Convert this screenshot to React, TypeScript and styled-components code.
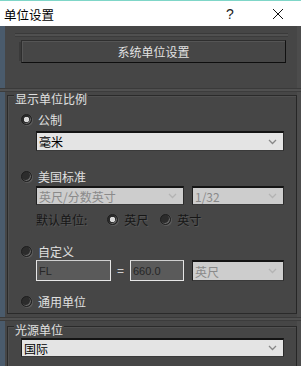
import React from 'react'
import styled, { createGlobalStyle } from 'styled-components'

const GlobalStyle = createGlobalStyle`
  html, body {
    margin: 0;
    padding: 0;
    background: #464646;
  }
  body {
    font-family: "Noto Sans CJK SC", "Liberation Sans", sans-serif;
    font-size: 12px;
  }
`

const Window = styled.div`
  width: 301px;
  height: 366px;
  display: flex;
  flex-direction: column;
  overflow: hidden;
`

const TitleBar = styled.div`
  height: 25px;
  flex: none;
  display: flex;
  align-items: center;
  background: #ffffff;
  border-top: 1px solid #7fd6c8;
  color: #000;
  font-size: 12.5px;
`

const Title = styled.div`
  flex: 1;
  padding-left: 4px;
  margin-top: 1px;
`

const Help = styled.div`
  width: 12px;
  margin-right: 33px;
  font-family: "Liberation Sans", sans-serif;
  font-size: 14px;
  color: #222;
`

const Close = styled.div`
  width: 14px;
  height: 14px;
  margin-right: 16px;
  display: flex;
  align-items: center;
  justify-content: center;
`

const Body = styled.div`
  flex: 1;
  display: flex;
  flex-direction: column;
  background: #464646;
  border-left: 5px solid #4a5b6c;
  border-right: 4px solid #4c4c4c;
  color: #dedede;
`

const RolloutBar = styled.div<{ $top: number; $left: number; $right: number }>`
  height: 2px;
  margin: ${({ $top, $left, $right }) => `${$top}px ${$right}px 0 ${$left}px`};
  border-top: 1px solid #3a3a3a;
  border-bottom: 1px solid #3c3c3c;
  background: #505050;
`

const BigButton = styled.div`
  height: 21px;
  margin: 3px 11px 0 16px;
  display: flex;
  align-items: center;
  justify-content: center;
  background: #464646;
  border: 1px solid #2e2e2e;
  border-bottom-color: #0e0e0e;
  border-right-color: #111;
  box-shadow: inset 1px 1px 0 #555, -4px 0 0 -2px #3a3a3a;
  color: #e2e2e2;
  font-size: 12px;
`

const GroupBox = styled.div<{ $top: number; $bottom: number; $inset: number }>`
  margin: ${({ $top }) => $top}px 0 0 2px;
  padding: 0 12px ${({ $bottom }) => $bottom}px ${({ $inset }) => $inset}px;
  border: 1px solid #2a2a2a;
  border-right-color: #262626;
  box-shadow: inset 1px 1px 0 #505050;
  display: flex;
  flex-direction: column;
`

const Legend = styled.div<{ $inset: number }>`
  align-self: flex-start;
  margin: -4px 0 0 ${({ $inset }) => 6 - $inset}px;
  padding: 0 1px;
  height: 14px;
  line-height: 14px;
  background: #464646;
  color: #e0e0e0;
`

const RadioRow = styled.div<{ $top: number; $outdent?: boolean }>`
  margin-top: ${({ $top }) => $top}px;
  margin-left: ${({ $outdent }) => ($outdent ? -15 : 0)}px;
  height: 14px;
  display: flex;
  align-items: center;
  gap: 6px;
  color: #e0e0e0;
`

const DimText = styled.span`
  color: #161616;
  text-shadow: 1px 1px 0 #555;
`

const Radio = styled.span<{ $checked?: boolean; $before?: number }>`
  width: 9px;
  height: 9px;
  margin-left: ${({ $before }) => $before ?? 0}px;
  border-radius: 50%;
  flex: none;
  background: ${({ $checked }) =>
    $checked ? 'radial-gradient(circle, #d8d8d8 0 2.5px, #2a2a2a 3px)' : '#2c2c2c'};
  border: 1px solid #1e1e1e;
  box-shadow: -1px -1px 0 #6a6a6a inset, 1px 1px 0 #5a5a5a;
`

const FieldRow = styled.div<{ $top: number }>`
  margin-top: ${({ $top }) => $top}px;
  display: flex;
  align-items: center;
`

const Select = styled.div<{ $width?: number; $disabled?: boolean; $height?: number }>`
  ${({ $width }) => ($width ? `width: ${$width}px; flex: none;` : 'flex: 1;')}
  height: ${({ $height }) => $height ?? 20}px;
  box-sizing: border-box;
  display: flex;
  align-items: center;
  padding: 0 6px 0 2px;
  background: ${({ $disabled }) => ($disabled ? '#cdcdcd' : '#e4e4e4')};
  border-top: 2px solid #141414;
  border-left: 1px solid #1e1e1e;
  border-right: 1px solid #2a2a2a;
  border-bottom: 1px solid #3a3a3a;
  color: ${({ $disabled }) => ($disabled ? '#8a8a8a' : '#000')};
  font-size: 12px;
`

const SelectText = styled.span`
  flex: 1;
  white-space: nowrap;
  overflow: hidden;
`

const TextInput = styled.div<{ $width: number }>`
  width: ${({ $width }) => $width}px;
  height: 21px;
  box-sizing: border-box;
  flex: none;
  display: flex;
  align-items: center;
  padding-left: 2px;
  background: #5a5a5a;
  border: 1px solid #e6e6e6;
  border-top-color: #cfcfcf;
  color: #262626;
  font-family: "Liberation Sans", sans-serif;
  font-size: 11px;
`

const Equals = styled.span`
  width: 19px;
  text-align: center;
  color: #cfcfcf;
  font-family: "Liberation Sans", sans-serif;
`

const Spacer = styled.span<{ $w: number }>`
  width: ${({ $w }) => $w}px;
  flex: none;
`

const Chevron = ({ color }: { color: string }) => (
  <svg width="9" height="6" viewBox="0 0 9 6">
    <path d="M1 1 L4.5 4.5 L8 1" fill="none" stroke={color} strokeWidth="1.3" />
  </svg>
)

const Dropdown = ({
  text,
  width,
  disabled,
  height,
}: {
  text: string
  width?: number
  disabled?: boolean
  height?: number
}) => (
  <Select $width={width} $disabled={disabled} $height={height}>
    <SelectText>{text}</SelectText>
    <Chevron color={disabled ? '#b4b4b4' : '#888'} />
  </Select>
)

export default function App() {
  return (
    <>
      <GlobalStyle />
      <Window>
        <TitleBar>
          <Title>单位设置</Title>
          <Help>?</Help>
          <Close>
            <svg width="12" height="12" viewBox="0 0 12 12">
              <path d="M1 1 L11 11 M11 1 L1 11" stroke="#111" strokeWidth="1" />
            </svg>
          </Close>
        </TitleBar>
        <Body>
          <RolloutBar $top={7} $left={10} $right={9} />
          <BigButton>系统单位设置</BigButton>
          <RolloutBar $top={25} $left={-5} $right={-4} />
          <GroupBox $top={3} $bottom={5} $inset={28}>
            <Legend $inset={28}>显示单位比例</Legend>
            <RadioRow $top={6} $outdent>
              <Radio $checked />
              <span>公制</span>
            </RadioRow>
            <FieldRow $top={5}>
              <Dropdown text="毫米" />
            </FieldRow>
            <RadioRow $top={18} $outdent>
              <Radio />
              <span>美国标准</span>
            </RadioRow>
            <FieldRow $top={3}>
              <Dropdown text="英尺/分数英寸" width={148} disabled height={19} />
              <Spacer $w={8} />
              <Dropdown text="1/32" disabled height={19} />
            </FieldRow>
            <RadioRow $top={7}>
              <DimText>默认单位:</DimText>
              <Radio $checked $before={14} />
              <DimText>英尺</DimText>
              <Radio $before={6} />
              <DimText>英寸</DimText>
            </RadioRow>
            <RadioRow $top={18} $outdent>
              <Radio />
              <span>自定义</span>
            </RadioRow>
            <FieldRow $top={2}>
              <TextInput $width={75}>FL</TextInput>
              <Equals>=</Equals>
              <TextInput $width={54}>660.0</TextInput>
              <Spacer $w={8} />
              <Dropdown text="英尺" disabled height={21} />
            </FieldRow>
            <RadioRow $top={13} $outdent>
              <Radio />
              <span>通用单位</span>
            </RadioRow>
          </GroupBox>
          <RolloutBar $top={3} $left={-5} $right={-4} />
          <GroupBox $top={5} $bottom={10} $inset={13}>
            <Legend $inset={13}>光源单位</Legend>
            <FieldRow $top={1}>
              <Dropdown text="国际" height={19} />
            </FieldRow>
          </GroupBox>
        </Body>
      </Window>
    </>
  )
}
